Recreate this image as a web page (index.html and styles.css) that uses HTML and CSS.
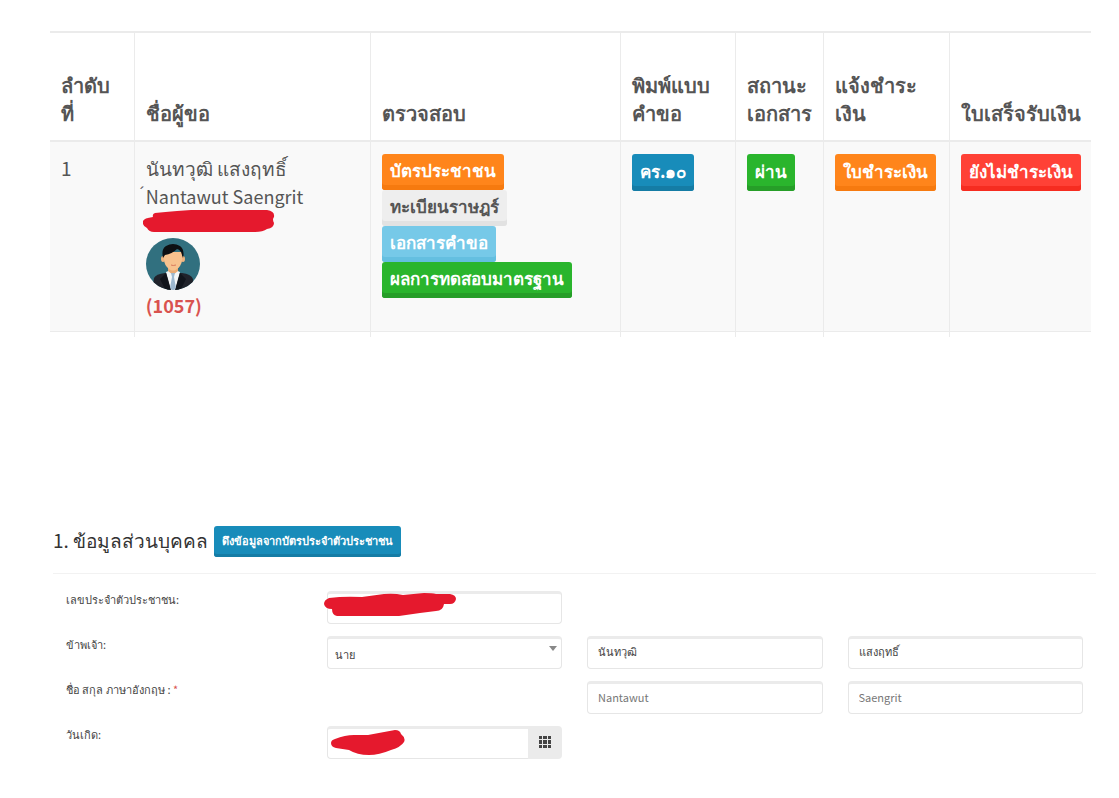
FILE: index.html
```html
<!DOCTYPE html>
<html lang="th">

<head>
    <title>รายการคำขอ</title>
    <meta charset="UTF-8">
    <link rel="stylesheet" href="styles.css">
</head>

<body>
<!-- ตารางคำขอ -->
<table class="request-table">
    <thead>
    <tr>
        <th class="col-no">ลำดับ<br>ที่</th>
        <th class="col-name">ชื่อผู้ขอ</th>
        <th class="col-check">ตรวจสอบ</th>
        <th class="col-print">พิมพ์แบบ<br>คำขอ</th>
        <th class="col-status">สถานะ<br>เอกสาร</th>
        <th class="col-pay">แจ้งชำระ<br>เงิน</th>
        <th class="col-receipt">ใบเสร็จรับเงิน</th>
    </tr>
    </thead>
    <tbody>
    <tr class="request-row">
        <td>1</td>
        <td>
            <div>นันทวุฒิ แสงฤทธิ์</div>
            <div class="name-en">Nantawut Saengrit<span class="tone-mark">´</span></div>
            <svg class="name-mask" width="133" height="23" viewBox="0 0 133 23" aria-hidden="true">
                <path fill="#e5192d" d="M12 3Q22 2 34 1L48 0H124Q132 1 131 7Q129 9 131 13Q131 18 124 19Q120 22 112 22H11Q6 22 4 18Q-1 16 0 11Q1 8 10 7Q9 4 12 3Z"/>
            </svg>
            <svg class="avatar" width="54" height="54" viewBox="0 0 54 54" role="img" aria-label="ผู้ขอ">
                <clipPath id="avatar-clip">
                    <ellipse cx="27" cy="27" rx="27" ry="26"/>
                </clipPath>
                <g clip-path="url(#avatar-clip)">
                    <rect width="54" height="54" fill="#31707f"/>
                    <path fill="#20232b" d="M6 54L8 41Q10 37 19 36H36Q45 37 47 42L48 54Z"/>
                    <path fill="#f5f7f8" d="M20 35L27 32L34 35L29 53H25Z"/>
                    <path fill="#e9ab75" d="M22 29H32V34L27 38L22 34Z"/>
                    <ellipse cx="17" cy="22" rx="2" ry="3" fill="#efb47f"/>
                    <ellipse cx="37" cy="22" rx="2" ry="3" fill="#efb47f"/>
                    <path fill="#f7c28e" d="M18 15H36V24Q35 29 31 32Q27 35 23 32Q18 28 18 22Z"/>
                    <path fill="#0d1013" d="M17 21Q15 12 20 9Q27 5 34 9Q39 13 37 21L35 15Q33 12 31 12Q26 17 19 18Z"/>
                    <path fill="none" stroke="#d7795c" d="M25 28Q27 29 30 28"/>
                    <path fill="#9db8d0" d="M25 36H29L28 40L30 51L27 54L24 51L26 40Z"/>
                    <path fill="#11151c" d="M20 36L25 54H20L14 42ZM34 36L29 54H34L40 42Z"/>
                </g>
            </svg>
            <div class="score">(1057)</div>
        </td>
        <td>
            <div class="button-list">
                <button type="button" class="btn orange">บัตรประชาชน</button>
                <button type="button" class="btn gray">ทะเบียนราษฎร์</button>
                <button type="button" class="btn sky">เอกสารคำขอ</button>
                <button type="button" class="btn green">ผลการทดสอบมาตรฐาน</button>
            </div>
        </td>
        <td><button type="button" class="btn blue">คร.๑๐</button></td>
        <td><button type="button" class="btn green">ผ่าน</button></td>
        <td><button type="button" class="btn orange">ใบชำระเงิน</button></td>
        <td><button type="button" class="btn red">ยังไม่ชำระเงิน</button></td>
    </tr>
    <tr class="next-row">
        <td></td><td></td><td></td><td></td><td></td><td></td><td></td>
    </tr>
    </tbody>
</table>

<!-- ข้อมูลส่วนบุคคล -->
<form class="personal">
    <div class="personal-head">
        <h2>1. ข้อมูลส่วนบุคคล</h2>
        <button type="button" class="btn blue small">ดึงข้อมูลจากบัตรประจำตัวประชาชน</button>
    </div>

    <div class="form-row">
        <label for="citizen-id">เลขประจำตัวประชาชน:</label>
        <div class="field">
            <input type="text" id="citizen-id">
            <svg class="mask id-mask" width="132" height="24" viewBox="0 0 132 24" aria-hidden="true">
                <path fill="#e5192d" d="M5 5Q20 3 38 4L60 1Q70 0 79 2L100 0Q108 0 112 1H126Q132 2 132 6Q131 11 126 11H120Q119 18 112 18L96 20L75 23H13Q8 22 8 16Q1 16 0 11Q0 7 5 5Z"/>
            </svg>
        </div>
    </div>

    <div class="form-row">
        <label for="title">ข้าพเจ้า:</label>
        <div class="field select-field">
            <select id="title">
                <option>นาย</option>
            </select>
        </div>
        <input type="text" aria-label="ชื่อ" value="นันทวุฒิ">
        <input type="text" aria-label="สกุล" value="แสงฤทธิ์">
    </div>

    <div class="form-row">
        <label for="name-en">ชื่อ สกุล ภาษาอังกฤษ : <span class="required">*</span></label>
        <input type="text" id="name-en" class="first-name latin" value="Nantawut">
        <input type="text" aria-label="Surname" class="latin" value="Saengrit">
    </div>

    <div class="form-row">
        <label for="birthday">วันเกิด:</label>
        <div class="field date-field">
            <input type="text" id="birthday">
            <button type="button" class="date-button" aria-label="เลือกวันที่">
                <svg width="12" height="12" viewBox="0 0 12 12">
                    <path fill="#444" d="M0 0h3v3H0zM4 0h4v3H4zM9 0h3v3H9zM0 4h3v4H0zM4 4h4v4H4zM9 4h3v4H9zM0 9h3v3H0zM4 9h4v3H4zM9 9h3v3H9z"/>
                </svg>
            </button>
            <svg class="mask date-mask" width="74" height="26" viewBox="0 0 74 26" aria-hidden="true">
                <path fill="#e5192d" d="M4 9Q14 5 23 5H37L64 0Q69 0 70 4Q75 8 73 12Q70 17 60 20Q48 25 38 25Q26 25 18 20L5 18Q0 17 0 13Q0 10 4 9Z"/>
            </svg>
        </div>
    </div>
</form>
</body>

</html>
```
FILE: styles.css
```css
* {
    box-sizing: border-box;
}

body {
    margin: 0;
    padding: 31px 23px 32px 50px;
    background-color: #ffffff;
    color: #555555;
    font-family: "Noto Sans CJK SC", sans-serif;
}

/* ตารางคำขอ */
.request-table {
    width: calc(100% - 5px);
    table-layout: fixed;
    border-collapse: collapse;
    border-top: 2px solid #ebebeb;
    font-size: 19px;
    line-height: 28px;
}

.request-table th,
.request-table td {
    padding: 12px 0 12px 11px;
    border-left: 1px solid #ebebeb;
    text-align: left;
    white-space: nowrap;
}

.request-table th:first-child,
.request-table td:first-child {
    border-left: none;
}

.request-table th {
    height: 109px;
    padding-bottom: 13px;
    vertical-align: bottom;
    border-bottom: 2px solid #ebebeb;
    font-size: 20px;
}

.col-no {
    width: 8.1%;
}

.col-name {
    width: 22.7%;
}

.col-check {
    width: 24%;
}

.col-print {
    width: 11.1%;
}

.col-status {
    width: 8.4%;
}

.col-pay {
    width: 12.1%;
}

.request-table td {
    vertical-align: top;
}

.request-row {
    height: 190px;
    background-color: #f9f9f9;
    border-bottom: 1px solid #ebebeb;
}

.request-table .next-row td {
    height: 5px;
    padding: 0;
}

.name-en {
    position: relative;
    font-size: 18px;
}

.tone-mark {
    position: absolute;
    left: -6px;
    top: 0;
    font-family: "Liberation Sans", sans-serif;
    font-size: 16px;
    line-height: 24px;
}

.name-mask {
    display: block;
    margin-left: -3px;
}

.avatar {
    display: block;
    margin-top: 4px;
}

.score {
    color: #d9534f;
    font-size: 18px;
    font-weight: bold;
}

/* ปุ่ม */
.btn {
    height: 37px;
    padding: 0 8px 4px;
    border: none;
    border-radius: 3px;
    color: #ffffff;
    font-family: inherit;
    font-size: 17px;
    font-weight: bold;
    line-height: 32px;
    white-space: nowrap;
    cursor: pointer;
}

.button-list {
    display: flex;
    flex-direction: column;
    align-items: flex-start;
}

.button-list .btn {
    height: 36px;
}

.orange {
    background-color: #ff851b;
    box-shadow: inset 0 -5px #f67a0f;
}

.gray {
    background-color: #eeeeee;
    box-shadow: inset 0 -5px #e2e2e2;
    color: #555555;
}

.sky {
    background-color: #76c9e8;
    box-shadow: inset 0 -5px #64bfe0;
}

.green {
    background-color: #2ab52d;
    box-shadow: inset 0 -5px #269e28;
}

.blue {
    background-color: #188cba;
    box-shadow: inset 0 -5px #157ca5;
}

.red {
    background-color: #ff4136;
    box-shadow: inset 0 -5px #f62c20;
}

.small {
    height: 31px;
    padding: 0 8px 3px;
    font-size: 11px;
    line-height: 26px;
    box-shadow: inset 0 -3px #157ca5;
}

/* แบบฟอร์ม */
.personal {
    margin: 189px 0 0 3px;
}

.personal-head {
    display: flex;
    align-items: flex-start;
    gap: 6px;
    height: 48px;
    margin-bottom: 17px;
    border-bottom: 1px solid #f2f2f2;
}

.personal-head h2 {
    margin: 0;
    color: #333333;
    font-size: 19px;
    font-weight: normal;
    line-height: 28px;
}

.form-row {
    display: grid;
    grid-template-columns: repeat(4, 1fr);
    gap: 25px;
    padding: 0 13px;
    margin-bottom: 12px;
}

.form-row label {
    color: #444444;
    font-size: 11px;
    line-height: 17px;
    white-space: nowrap;
}

.required {
    color: #d9534f;
}

.field {
    position: relative;
}

.form-row input,
.form-row select {
    display: block;
    width: 100%;
    height: 33px;
    padding: 0 10px 2px;
    border: 1px solid #e6e6e6;
    border-top: 3px solid #ebebeb;
    border-radius: 4px;
    background-color: #ffffff;
    color: #444444;
    font-family: inherit;
    font-size: 11px;
    outline: none;
}

.form-row .latin {
    color: #777777;
}

.form-row select {
    padding: 2px 7px 0;
    appearance: none;
}

.select-field::after {
    content: "";
    position: absolute;
    right: 5px;
    top: 10px;
    border: 4px solid transparent;
    border-top: 5px solid #888888;
    border-bottom: none;
}

.first-name {
    grid-column: 3;
}

.date-field {
    display: flex;
}

.form-row .date-field input {
    flex: 1;
    min-width: 0;
    border-radius: 4px 0 0 4px;
    border-right: none;
}

.date-button {
    display: flex;
    align-items: center;
    justify-content: center;
    width: 34px;
    height: 33px;
    padding: 0;
    border: none;
    border-radius: 0 4px 4px 0;
    background-color: #ebebeb;
    cursor: pointer;
}

/* แถบปิดข้อมูลส่วนตัว */
.mask {
    position: absolute;
}

.id-mask {
    left: -3px;
    top: 2px;
}

.date-mask {
    left: 4px;
    top: 4px;
}
```
